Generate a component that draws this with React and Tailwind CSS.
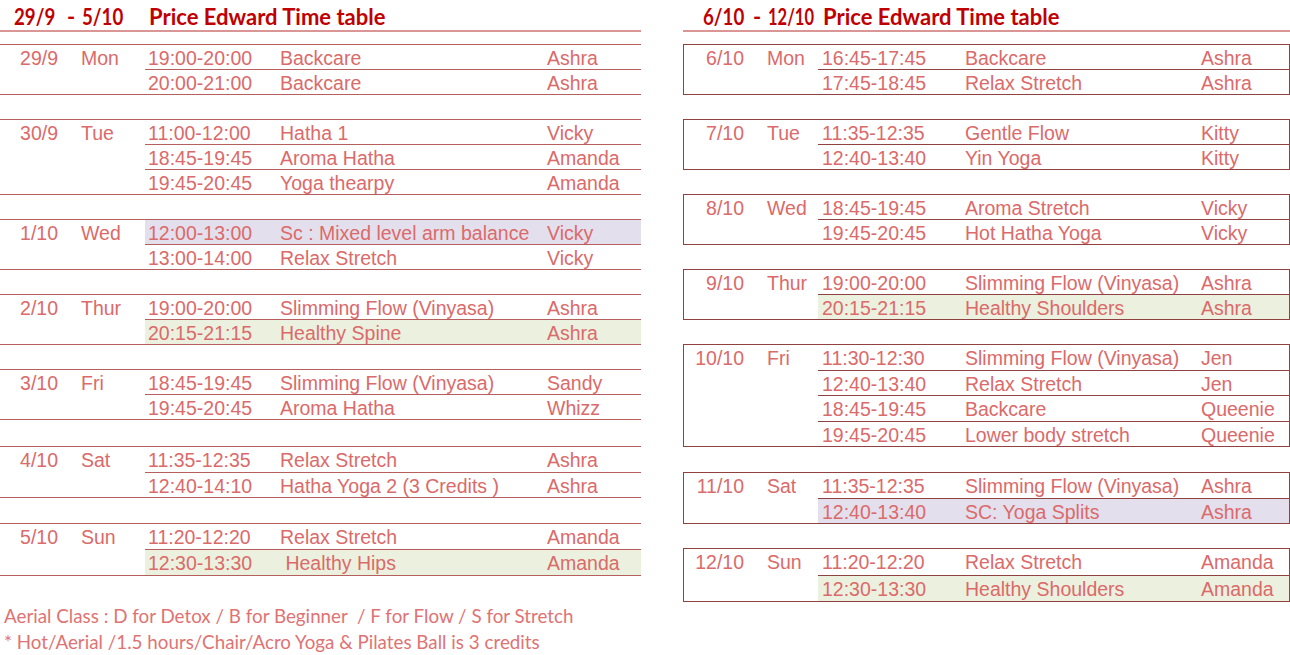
import React from 'react';

// row height / gap classes follow the sheet's uneven Excel rows
const LEFT_WEEK = [
  { date: '29/9', day: 'Mon', gap: '', rowH: 'h-[24px] leading-[24px]', rows: [
    { time: '19:00-20:00', name: 'Backcare', who: 'Ashra' },
    { time: '20:00-21:00', name: 'Backcare', who: 'Ashra' },
  ] },
  { date: '30/9', day: 'Tue', gap: 'mt-[24px]', rowH: 'h-[24px] leading-[24px]', rows: [
    { time: '11:00-12:00', name: 'Hatha 1', who: 'Vicky' },
    { time: '18:45-19:45', name: 'Aroma Hatha', who: 'Amanda' },
    { time: '19:45-20:45', name: 'Yoga thearpy', who: 'Amanda' },
  ] },
  { date: '1/10', day: 'Wed', gap: 'mt-[24px]', rowH: 'h-[24px] leading-[24px]', rows: [
    { time: '12:00-13:00', name: 'Sc : Mixed level arm balance', who: 'Vicky', tint: 'purple' },
    { time: '13:00-14:00', name: 'Relax Stretch', who: 'Vicky' },
  ] },
  { date: '2/10', day: 'Thur', gap: 'mt-[24px]', rowH: 'h-[24px] leading-[24px]', rows: [
    { time: '19:00-20:00', name: 'Slimming Flow (Vinyasa)', who: 'Ashra' },
    { time: '20:15-21:15', name: 'Healthy Spine', who: 'Ashra', tint: 'green' },
  ] },
  { date: '3/10', day: 'Fri', gap: 'mt-[24px]', rowH: 'h-[24px] leading-[24px]', rows: [
    { time: '18:45-19:45', name: 'Slimming Flow (Vinyasa)', who: 'Sandy' },
    { time: '19:45-20:45', name: 'Aroma Hatha', who: 'Whizz' },
  ] },
  { date: '4/10', day: 'Sat', gap: 'mt-[26px]', rowH: 'h-[24.5px] leading-[24.5px]', rows: [
    { time: '11:35-12:35', name: 'Relax Stretch', who: 'Ashra' },
    { time: '12:40-14:10', name: 'Hatha Yoga 2 (3 Credits )', who: 'Ashra' },
  ] },
  { date: '5/10', day: 'Sun', gap: 'mt-[25px]', rowH: 'h-[25px] leading-[25px]', rows: [
    { time: '11:20-12:20', name: 'Relax Stretch', who: 'Amanda' },
    { time: '12:30-13:30', name: '\u00a0Healthy Hips', who: 'Amanda', tint: 'green' },
  ] },
];

const RIGHT_WEEK = [
  { date: '6/10', day: 'Mon', gap: '', rowH: 'h-[24px] leading-[24px]', rows: [
    { time: '16:45-17:45', name: 'Backcare', who: 'Ashra' },
    { time: '17:45-18:45', name: 'Relax Stretch', who: 'Ashra' },
  ] },
  { date: '7/10', day: 'Tue', gap: 'mt-[24px]', rowH: 'h-[24px] leading-[24px]', rows: [
    { time: '11:35-12:35', name: 'Gentle Flow', who: 'Kitty' },
    { time: '12:40-13:40', name: 'Yin Yoga', who: 'Kitty' },
  ] },
  { date: '8/10', day: 'Wed', gap: 'mt-[24px]', rowH: 'h-[24px] leading-[24px]', rows: [
    { time: '18:45-19:45', name: 'Aroma Stretch', who: 'Vicky' },
    { time: '19:45-20:45', name: 'Hot Hatha Yoga', who: 'Vicky' },
  ] },
  { date: '9/10', day: 'Thur', gap: 'mt-[24px]', rowH: 'h-[24px] leading-[24px]', rows: [
    { time: '19:00-20:00', name: 'Slimming Flow (Vinyasa)', who: 'Ashra' },
    { time: '20:15-21:15', name: 'Healthy Shoulders', who: 'Ashra', tint: 'green' },
  ] },
  { date: '10/10', day: 'Fri', gap: 'mt-[24px]', rowH: 'h-[24.5px] leading-[24.5px]', rows: [
    { time: '11:30-12:30', name: 'Slimming Flow (Vinyasa)', who: 'Jen' },
    { time: '12:40-13:40', name: 'Relax Stretch', who: 'Jen' },
    { time: '18:45-19:45', name: 'Backcare', who: 'Queenie' },
    { time: '19:45-20:45', name: 'Lower body stretch', who: 'Queenie' },
  ] },
  { date: '11/10', day: 'Sat', gap: 'mt-[25px]', rowH: 'h-[24.5px] leading-[24.5px]', rows: [
    { time: '11:35-12:35', name: 'Slimming Flow (Vinyasa)', who: 'Ashra' },
    { time: '12:40-13:40', name: 'SC: Yoga Splits', who: 'Ashra', tint: 'purple' },
  ] },
  { date: '12/10', day: 'Sun', gap: 'mt-[24px]', rowH: 'h-[25.5px] leading-[25.5px]', rows: [
    { time: '11:20-12:20', name: 'Relax Stretch', who: 'Amanda' },
    { time: '12:30-13:30', name: 'Healthy Shoulders', who: 'Amanda', tint: 'green' },
  ] },
];

const tints = {
  purple: 'bg-[#e4dfec]',
  green: 'bg-[#ebf1de]',
  none: '',
};

// column widths differ a little between the two sheets
const layouts = {
  left: {
    group: 'border-y border-[#b5605d]',
    divider: 'border-[#b5605d]',
    date: 'w-[58px]',
    day: 'w-[87px] pl-[23px]',
    time: 'w-[135px] pl-[3px]',
    name: 'w-[267px]',
  },
  right: {
    group: 'border border-[#8f4240]',
    divider: 'border-[#8f4240]',
    date: 'w-[60px]',
    day: 'w-[74px] pl-[23px]',
    time: 'w-[147px] pl-[4px]',
    name: 'w-[236px]',
  },
};

function DayGroup({ item, side }) {
  const l = layouts[side];
  return (
    <div className={`flex ${l.group} ${item.gap}`}>
      <div className={`${l.date} ${item.rowH} pt-px text-right`}>{item.date}</div>
      <div className={`${l.day} ${item.rowH} pt-px`}>{item.day}</div>
      <div className="flex-1 flex flex-col">
        {item.rows.map((r, i) => (
          <div
            key={i}
            className={`flex box-content ${item.rowH} ${i > 0 ? `border-t ${l.divider}` : ''} ${tints[r.tint || 'none']}`}
          >
            <div className={`${l.time} pt-px whitespace-pre`}>{r.time}</div>
            <div className={`${l.name} pt-px whitespace-pre`}>{r.name}</div>
            <div className="flex-1 pt-px">{r.who}</div>
          </div>
        ))}
      </div>
    </div>
  );
}

function Sheet({ side, from, to, data, fromCls, dashCls, toCls, toScale }) {
  return (
    <div>
      <div className="h-[32px] border-b-2 border-[#d99694] flex items-end pb-[2px] text-[#c00000] font-bold text-[22px] leading-none" style={{ fontFamily: 'Lato, "Open Sans", sans-serif' }}>
        <span className={fromCls}>
          <span className="inline-block origin-left scale-x-[0.85]">{from}</span>
        </span>
        <span className={dashCls}>-</span>
        <span className={toCls}>
          <span className={`inline-block origin-left ${toScale}`}>{to}</span>
        </span>
        <span>Price Edward Time table</span>
      </div>
      <div className="mt-[12px] flex flex-col text-[19.5px] text-[#db6a6a]" style={{ fontFamily: '"Liberation Sans", Arial, sans-serif' }}>
        {data.map((item) => (
          <DayGroup key={item.date} item={item} side={side} />
        ))}
      </div>
    </div>
  );
}

export default function App() {
  return (
    <div className="w-[1290px] h-[655px] bg-white overflow-hidden flex">
      <div className="w-[641px] shrink-0">
        <Sheet
          side="left"
          from="29/9"
          to="5/10"
          data={LEFT_WEEK}
          fromCls="ml-[14px] w-[53px]"
          dashCls="w-[15px]"
          toCls="w-[67px]"
          toScale="scale-x-[0.85]"
        />
        <div className="mt-[27px] pl-[4px] text-[18.8px] leading-[26px] text-[#df7373]" style={{ fontFamily: 'Lato, "Noto Sans", sans-serif' }}>
          <p className="whitespace-pre">Aerial Class : D for Detox / B for Beginner  / F for Flow / S for Stretch</p>
          <p>* Hot/Aerial /1.5 hours/Chair/Acro Yoga &amp; Pilates Ball is 3 credits</p>
        </div>
      </div>
      <div className="w-[607px] ml-[42px] shrink-0">
        <Sheet
          side="right"
          from="6/10"
          to="12/10"
          data={RIGHT_WEEK}
          fromCls="ml-[20px] w-[50px]"
          dashCls="w-[15px]"
          toCls="w-[55px]"
          toScale="scale-x-[0.75]"
        />
      </div>
    </div>
  );
}
